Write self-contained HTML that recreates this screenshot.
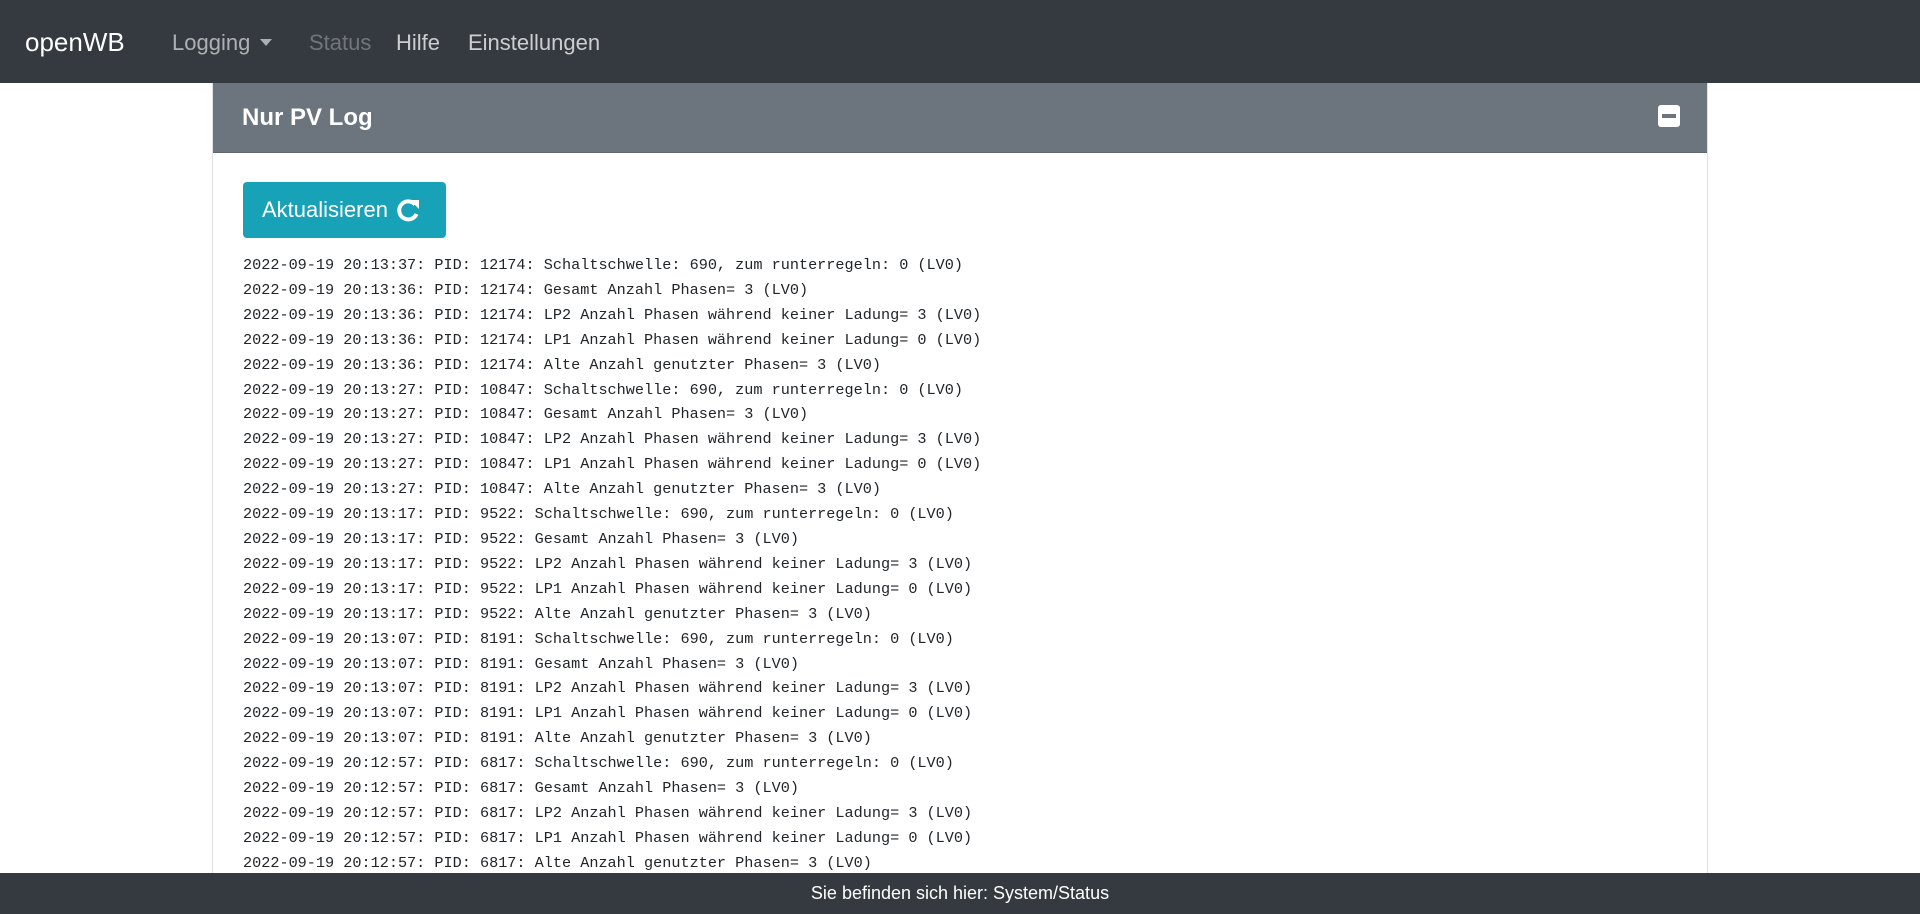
<!DOCTYPE html>
<html><head><meta charset="utf-8"><style>
*{box-sizing:border-box;margin:0;padding:0}
body{width:1920px;height:914px;overflow:hidden;background:#fff;font-family:"Liberation Sans",sans-serif;position:relative}
.nav{position:absolute;left:0;top:0;width:1920px;height:83px;background:#343a40}
.nav span{position:absolute;top:29px;font-size:22px;line-height:28px}
.card{position:absolute;left:212px;top:83px;width:1496px;height:831px;border-left:1px solid #dee2e6;border-right:1px solid #dee2e6}
.hdr{height:70px;background:#6c757d;border-bottom:1px solid #5f666d;position:relative}
.hdr b{position:absolute;left:29px;top:21px;color:#fff;font-size:24px;line-height:28px}
.mini{position:absolute;left:1445px;top:22px;width:22px;height:22px;background:#fff;border-radius:3px}
.mini i{position:absolute;left:4px;top:9px;width:14px;height:4px;background:#6c757d}
.btn{position:absolute;left:30px;top:99px;width:203px;height:56px;background:#17a2b8;border-radius:4px;color:#fff;font-size:22px;line-height:56px;padding-left:19px}
.btn svg{position:absolute;left:153px;top:16px}
pre{position:absolute;left:30px;top:170px;font-family:"Liberation Mono",monospace;font-size:15.2px;line-height:24.9px;color:#212529}
.foot{position:absolute;left:0;top:873px;width:1920px;height:41px;background:#343a40;color:#fff;font-size:18px;line-height:41px;text-align:center}
</style></head><body>
<div class="nav">
<span style="left:25px;color:#fff;font-size:26px;top:26px;line-height:32px">openWB</span>
<span style="left:172px;color:rgba(255,255,255,.6)">Logging <span style="position:static;display:inline-block;width:0;height:0;border-left:6px solid transparent;border-right:6px solid transparent;border-top:7px solid rgba(255,255,255,.6);vertical-align:4px;margin-left:4px"></span></span>
<span style="left:309px;color:rgba(255,255,255,.3)">Status</span>
<span style="left:396px;color:rgba(255,255,255,.75)">Hilfe</span>
<span style="left:468px;color:rgba(255,255,255,.75)">Einstellungen</span>
</div>
<div class="card">
<div class="hdr"><b>Nur PV Log</b><div class="mini"><i></i></div></div>
<div class="btn">Aktualisieren<svg width="24" height="24" viewBox="0 0 24 24"><path d="M19 6.5A9 9 0 1 0 20.5 16" fill="none" stroke="#fff" stroke-width="4"/><path d="M14 2h9v9z" fill="#fff"/></svg></div>
<pre>2022-09-19 20:13:37: PID: 12174: Schaltschwelle: 690, zum runterregeln: 0 (LV0)
2022-09-19 20:13:36: PID: 12174: Gesamt Anzahl Phasen= 3 (LV0)
2022-09-19 20:13:36: PID: 12174: LP2 Anzahl Phasen während keiner Ladung= 3 (LV0)
2022-09-19 20:13:36: PID: 12174: LP1 Anzahl Phasen während keiner Ladung= 0 (LV0)
2022-09-19 20:13:36: PID: 12174: Alte Anzahl genutzter Phasen= 3 (LV0)
2022-09-19 20:13:27: PID: 10847: Schaltschwelle: 690, zum runterregeln: 0 (LV0)
2022-09-19 20:13:27: PID: 10847: Gesamt Anzahl Phasen= 3 (LV0)
2022-09-19 20:13:27: PID: 10847: LP2 Anzahl Phasen während keiner Ladung= 3 (LV0)
2022-09-19 20:13:27: PID: 10847: LP1 Anzahl Phasen während keiner Ladung= 0 (LV0)
2022-09-19 20:13:27: PID: 10847: Alte Anzahl genutzter Phasen= 3 (LV0)
2022-09-19 20:13:17: PID: 9522: Schaltschwelle: 690, zum runterregeln: 0 (LV0)
2022-09-19 20:13:17: PID: 9522: Gesamt Anzahl Phasen= 3 (LV0)
2022-09-19 20:13:17: PID: 9522: LP2 Anzahl Phasen während keiner Ladung= 3 (LV0)
2022-09-19 20:13:17: PID: 9522: LP1 Anzahl Phasen während keiner Ladung= 0 (LV0)
2022-09-19 20:13:17: PID: 9522: Alte Anzahl genutzter Phasen= 3 (LV0)
2022-09-19 20:13:07: PID: 8191: Schaltschwelle: 690, zum runterregeln: 0 (LV0)
2022-09-19 20:13:07: PID: 8191: Gesamt Anzahl Phasen= 3 (LV0)
2022-09-19 20:13:07: PID: 8191: LP2 Anzahl Phasen während keiner Ladung= 3 (LV0)
2022-09-19 20:13:07: PID: 8191: LP1 Anzahl Phasen während keiner Ladung= 0 (LV0)
2022-09-19 20:13:07: PID: 8191: Alte Anzahl genutzter Phasen= 3 (LV0)
2022-09-19 20:12:57: PID: 6817: Schaltschwelle: 690, zum runterregeln: 0 (LV0)
2022-09-19 20:12:57: PID: 6817: Gesamt Anzahl Phasen= 3 (LV0)
2022-09-19 20:12:57: PID: 6817: LP2 Anzahl Phasen während keiner Ladung= 3 (LV0)
2022-09-19 20:12:57: PID: 6817: LP1 Anzahl Phasen während keiner Ladung= 0 (LV0)
2022-09-19 20:12:57: PID: 6817: Alte Anzahl genutzter Phasen= 3 (LV0)
2022-09-19 20:12:47: PID: 5490: Schaltschwelle: 690, zum runterregeln: 0 (LV0)</pre>
</div>
<div class="foot">Sie befinden sich hier: System/Status</div>
</body></html>
